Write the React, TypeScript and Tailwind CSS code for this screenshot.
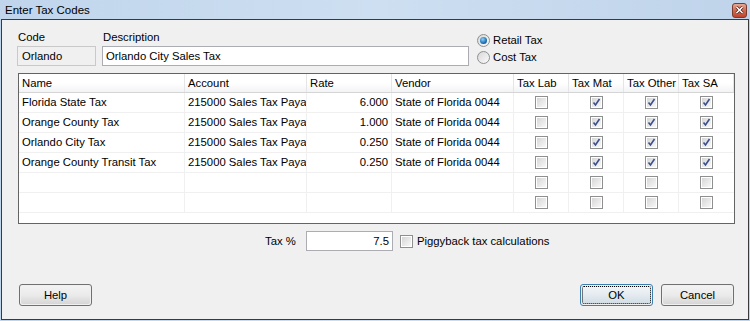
import React from 'react'

interface TaxRow {
  name: string
  account: string
  rate: string
  vendor: string
  lab: boolean
  mat: boolean
  other: boolean
  sa: boolean
}

const rows: (TaxRow | null)[] = [
  { name: 'Florida State Tax', account: '215000 Sales Tax Paya', rate: '6.000', vendor: 'State of Florida 0044', lab: false, mat: true, other: true, sa: true },
  { name: 'Orange County Tax', account: '215000 Sales Tax Paya', rate: '1.000', vendor: 'State of Florida 0044', lab: false, mat: true, other: true, sa: true },
  { name: 'Orlando City Tax', account: '215000 Sales Tax Paya', rate: '0.250', vendor: 'State of Florida 0044', lab: false, mat: true, other: true, sa: true },
  { name: 'Orange County Transit Tax', account: '215000 Sales Tax Paya', rate: '0.250', vendor: 'State of Florida 0044', lab: false, mat: true, other: true, sa: true },
  null,
  null,
]

const CheckBox: React.FC<{ checked?: boolean }> = ({ checked }) => (
  <span className="w-[13px] h-[13px] border border-[#8e8f8f] bg-white p-px flex">
    <span className="flex-1 bg-gradient-to-br from-[#d6d6d6] to-[#f8f8f8] flex items-center justify-center">
      {checked && (
        <svg width="9" height="9" viewBox="0 0 9 9">
          <path d="M1.5 4.5 L3.5 7 L7.5 1" fill="none" stroke="#3b4f8c" strokeWidth="1.6" />
        </svg>
      )}
    </span>
  </span>
)

const Radio: React.FC<{ checked?: boolean }> = ({ checked }) => (
  <span className="w-[13px] h-[13px] rounded-full border border-[#8e8f8f] bg-gradient-to-br from-[#d8d8d8] to-[#fbfbfb] flex items-center justify-center">
    {checked && <span className="w-[7px] h-[7px] rounded-full bg-[radial-gradient(circle_at_40%_35%,#8fd0f5,#1a6fb5_60%,#0d3f73)]" />}
  </span>
)

const DlgButton: React.FC<{ label: string; isDefault?: boolean }> = ({ label, isDefault }) => (
  <button
    className={
      'w-[73px] h-[22px] rounded-[3px] border p-px flex ' +
      (isDefault ? 'border-[#3c7fb1]' : 'border-[#707070]')
    }
  >
    <span
      className={
        'flex-1 rounded-[2px] flex items-center justify-center bg-gradient-to-b ' +
        (isDefault
          ? 'from-[#f0f4f7] via-[#e4ebf0] to-[#d3dde5] border border-dotted border-black'
          : 'from-[#f2f2f2] via-[#ebebeb] to-[#d6d6d6]')
      }
    >
      {label}
    </span>
  </button>
)

const cols = [
  { w: 'w-[166px]', title: 'Name' },
  { w: 'w-[122px]', title: 'Account' },
  { w: 'w-[85px]', title: 'Rate' },
  { w: 'w-[122px]', title: 'Vendor' },
  { w: 'w-[55px]', title: 'Tax Lab' },
  { w: 'w-[55px]', title: 'Tax Mat' },
  { w: 'w-[55px]', title: 'Tax Other' },
  { w: 'w-[55px]', title: 'Tax SA' },
]

const App: React.FC = () => {
  return (
    <div className="w-[750px] h-[321px] bg-gradient-to-r from-[#c0d5ec] via-[#cddff1] to-[#bfd3ea] font-['Liberation_Sans',Arial,sans-serif] text-[11.3px] text-black overflow-hidden">
      {/* title bar */}
      <div className="h-[19px] flex items-center justify-between pl-[5px] pr-[3px]">
        <span className="text-[11.5px] leading-[14px]">Enter Tax Codes</span>
        <span className="w-[15px] h-[15px] mt-[1px] rounded-[3px] border border-[#7a3a2e] bg-gradient-to-b from-[#e6a896] via-[#cf6a52] to-[#c0452c] flex items-center justify-center">
          <svg width="9" height="8" viewBox="0 0 9 8">
            <path d="M1.5 1 L7.5 7 M7.5 1 L1.5 7" stroke="#4a1a12" strokeWidth="3" />
            <path d="M1.5 1 L7.5 7 M7.5 1 L1.5 7" stroke="#ffffff" strokeWidth="1.6" />
          </svg>
        </span>
      </div>

      <div className="ml-px w-[748px] h-[301px] border border-[#3a3a3a] bg-[#f0f0f0] flex flex-col">
        {/* code / description / radios */}
        <div className="flex pt-[10px] pl-[15px]">
          <div className="w-[79px] flex flex-col">
            <span className="h-[14px] leading-[14px] pl-px">Code</span>
            <div className="mt-[2px] h-[20px] border border-[#c9c9c9] bg-[#f0f0f0] flex items-center pl-[4px]">Orlando</div>
          </div>
          <div className="ml-[6px] w-[367px] flex flex-col">
            <span className="h-[14px] leading-[14px] pl-px">Description</span>
            <div className="mt-[2px] h-[20px] border border-[#abadb3] bg-white flex items-center pl-[3px]">Orlando City Sales Tax</div>
          </div>
          <div className="ml-[8px] pt-[4px] flex flex-col gap-[4px]">
            <label className="flex items-center gap-[3px] h-[13px]">
              <Radio checked />
              <span>Retail Tax</span>
            </label>
            <label className="flex items-center gap-[3px] h-[13px]">
              <Radio />
              <span>Cost Tax</span>
            </label>
          </div>
        </div>

        {/* grid */}
        <div className="mt-[7px] ml-[16px] w-[717px] h-[151px] border border-[#646464] bg-white flex flex-col">
          <div className="h-[19px] flex border-b border-[#d5d5d5] bg-gradient-to-b from-white via-white to-[#f2f3f5]">
            {cols.map((c) => (
              <div key={c.title} className={c.w + ' shrink-0 border-r border-[#e5e5e5] pl-[3px] flex items-center whitespace-nowrap overflow-hidden'}>
                {c.title}
              </div>
            ))}
          </div>
          {rows.map((r, i) => (
            <div key={i} className="h-[20px] flex border-b border-[#f0f0f0]">
              <div className="w-[166px] shrink-0 border-r border-[#f0f0f0] pl-[3px] flex items-center whitespace-nowrap overflow-hidden">{r?.name}</div>
              <div className="w-[122px] shrink-0 border-r border-[#f0f0f0] pl-[3px] flex items-center whitespace-nowrap overflow-hidden">{r?.account}</div>
              <div className="w-[85px] shrink-0 border-r border-[#f0f0f0] pr-[3px] flex items-center justify-end">{r?.rate}</div>
              <div className="w-[122px] shrink-0 border-r border-[#f0f0f0] pl-[3px] flex items-center whitespace-nowrap overflow-hidden">{r?.vendor}</div>
              <div className="w-[55px] shrink-0 border-r border-[#f0f0f0] flex items-center justify-center"><CheckBox checked={r?.lab} /></div>
              <div className="w-[55px] shrink-0 border-r border-[#f0f0f0] flex items-center justify-center"><CheckBox checked={r?.mat} /></div>
              <div className="w-[55px] shrink-0 border-r border-[#f0f0f0] flex items-center justify-center"><CheckBox checked={r?.other} /></div>
              <div className="w-[55px] shrink-0 flex items-center justify-center"><CheckBox checked={r?.sa} /></div>
            </div>
          ))}
        </div>

        {/* tax percent */}
        <div className="mt-[7px] h-[20px] flex items-center">
          <span className="ml-[263px] w-[41px]">Tax %</span>
          <div className="w-[87px] h-[20px] border border-[#abadb3] bg-white flex items-center justify-end pr-[3px]">7.5</div>
          <label className="ml-[7px] flex items-center gap-[4px]">
            <CheckBox />
            <span>Piggyback tax calculations</span>
          </label>
        </div>

        {/* buttons */}
        <div className="mt-[33px] flex pl-[17px] pr-[14px]">
          <DlgButton label="Help" />
          <div className="flex-1" />
          <DlgButton label="OK" isDefault />
          <div className="w-[8px]" />
          <DlgButton label="Cancel" />
        </div>
      </div>
    </div>
  )
}

export default App
